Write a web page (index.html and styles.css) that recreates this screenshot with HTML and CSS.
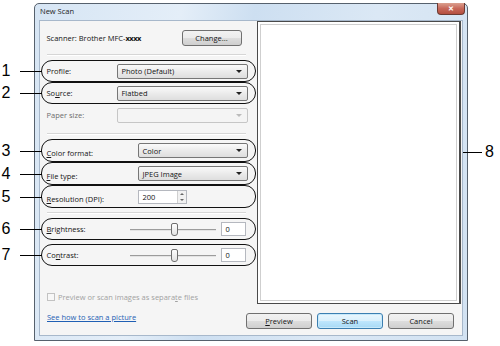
FILE: index.html
```html
<!DOCTYPE html>
<html lang="en">

<head>
    <meta charset="UTF-8">
    <meta name="viewport" content="width=device-width, initial-scale=1.0">
    <title>New Scan</title>
    <link rel="stylesheet" href="styles.css">
</head>

<body>
    <div class="window">
        <div class="titlebar">
            <span class="title">New Scan</span>
            <button class="close">&#x2715;</button>
        </div>

        <div class="client">
            <div class="main">
                <div class="settings">
                    <div class="row scanner-row">
                        <span class="scanner-name">Scanner: Brother MFC-<b>xxxx</b></span>
                        <button class="btn change">Change...</button>
                    </div>

                    <div class="sep"></div>

                    <div class="row marked first-sep">
                        <span class="callout">1</span>
                        <label class="lbl w70">Profile:</label>
                        <div class="select wide"><span>Photo (Default)</span><i class="arrow"></i></div>
                    </div>
                    <div class="row marked">
                        <span class="callout">2</span>
                        <label class="lbl w70">So<u>u</u>rce:</label>
                        <div class="select wide"><span>Flatbed</span><i class="arrow"></i></div>
                    </div>
                    <div class="row">
                        <label class="lbl w70 dim">Paper size:</label>
                        <div class="select wide disabled"><span></span><i class="arrow"></i></div>
                    </div>

                    <div class="sep"></div>

                    <div class="row marked tall first-sep">
                        <span class="callout">3</span>
                        <label class="lbl w91 low"><u>C</u>olor format:</label>
                        <div class="select mid"><span>Color</span><i class="arrow"></i></div>
                    </div>
                    <div class="row marked tall">
                        <span class="callout">4</span>
                        <label class="lbl w91 low"><u>F</u>ile type:</label>
                        <div class="select mid"><span>JPEG Image</span><i class="arrow"></i></div>
                    </div>
                    <div class="row marked tall">
                        <span class="callout">5</span>
                        <label class="lbl w91 low"><u>R</u>esolution (DPI):</label>
                        <div class="spin">
                            <span>200</span>
                            <div class="spin-btns"><i class="up"></i><i class="down"></i></div>
                        </div>
                    </div>

                    <div class="sep"></div>

                    <div class="row marked first-sep">
                        <span class="callout">6</span>
                        <label class="lbl w83"><u>B</u>rightness:</label>
                        <div class="slider"><i class="thumb"></i></div>
                        <div class="value">0</div>
                    </div>
                    <div class="row marked gap-top">
                        <span class="callout">7</span>
                        <label class="lbl w83">Co<u>n</u>trast:</label>
                        <div class="slider"><i class="thumb"></i></div>
                        <div class="value">0</div>
                    </div>

                    <div class="check">
                        <i class="box"></i>
                        <span>Preview or scan images as separa<u>t</u>e files</span>
                    </div>
                </div>

                <div class="preview">
                    <span class="callout right">8</span>
                </div>
            </div>

            <div class="footer">
                <a class="link" href="#">See how to scan a picture</a>
                <div class="buttons">
                    <button class="btn"><u>P</u>review</button>
                    <button class="btn default">Scan</button>
                    <button class="btn">Cancel</button>
                </div>
            </div>
        </div>
    </div>
</body>

</html>
```

FILE: styles.css
```css
body {
    margin: 0;
    background: #fff;
    font-family: "Open Sans", "Liberation Sans", sans-serif;
    font-size: 7.5px;
    color: #141414;
}

.window {
    box-sizing: border-box;
    width: 434px;
    height: 338px;
    margin: 3px 0 0 34px;
    padding: 0 5px 5px 5px;
    border: 1px solid #56616d;
    border-radius: 5px 5px 0 0;
    background: linear-gradient(100deg, #d6e5f4 0%, #e4eef8 30%, #cddff1 45%, #dbe8f5 70%, #d2e2f2 100%);
    display: flex;
    flex-direction: column;
}

.titlebar {
    height: 17px;
    display: flex;
    align-items: flex-start;
    justify-content: space-between;
}

.title {
    margin-top: 2px;
    color: #222;
}

.close {
    width: 28px;
    height: 12px;
    margin: -1px -3px 0 0;
    padding: 0;
    border: 1px solid #6b3a32;
    border-top: none;
    border-radius: 0 0 4px 4px;
    background: linear-gradient(#dba08f, #c7685a 50%, #b44f3f);
    color: #fff;
    font-size: 7px;
    font-weight: bold;
    line-height: 11px;
}

.client {
    flex: 1;
    display: flex;
    flex-direction: column;
    background: #f5f5f5;
    box-shadow: 0 0 0 1px #a7b8cb;
    padding-right: 1px;
}

.main {
    height: 283px;
    display: flex;
}

.settings {
    width: 217px;
    padding: 8px 0 0 1px;
    box-sizing: border-box;
}

.row {
    position: relative;
    box-sizing: border-box;
    width: 215px;
    height: 22px;
    display: flex;
    align-items: center;
    padding: 0 6.5px 0 4.5px;
    border: 1.5px solid transparent;
    border-radius: 11px;
}

.row.marked {
    border-color: #111;
}

.row.tall {
    height: 23px;
}

.row.first-sep {
    margin-top: 4px;
}

.row.gap-top {
    margin-top: 4px;
}

.scanner-row {
    height: 18px;
}

.scanner-name b {
    letter-spacing: -0.5px;
}

.sep {
    width: 199px;
    margin: 7px 0 0 6px;
    border-top: 1px solid #d6d6d6;
    border-bottom: 1px solid #fff;
}

.row.tall + .sep {
    margin-top: 4px;
}

.lbl {
    flex: none;
}

.w70 { width: 70px; }
.w83 { width: 83px; }
.w91 { width: 91px; }

.lbl.low {
    margin-top: 4px;
}

.lbl.dim {
    color: #6d6d6d;
}

.select {
    box-sizing: border-box;
    height: 15px;
    display: flex;
    align-items: center;
    justify-content: space-between;
    padding: 0 5px 0 4px;
    border: 1px solid #767676;
    border-radius: 2px;
    background: linear-gradient(#fafafa, #ebebeb 50%, #dedede);
}

.select.wide { width: 131px; }
.select.mid { width: 110px; }

.select.disabled {
    border-color: #c6c6c6;
    background: #f4f4f4;
}

.arrow {
    width: 0;
    height: 0;
    border-left: 3px solid transparent;
    border-right: 3px solid transparent;
    border-top: 3px solid #222;
}

.select.disabled .arrow {
    border-top-color: #bbb;
}

.spin {
    box-sizing: border-box;
    width: 49px;
    height: 14px;
    display: flex;
    align-items: center;
    justify-content: space-between;
    padding-left: 4px;
    border: 1px solid #b5b8bf;
    background: #fff;
}

.spin-btns {
    width: 8px;
    height: 12px;
    display: flex;
    flex-direction: column;
    justify-content: space-around;
    align-items: center;
    border-left: 1px solid #d0d0d0;
    background: #f1f1f1;
}

.spin-btns .up,
.spin-btns .down {
    width: 0;
    height: 0;
    border-left: 2px solid transparent;
    border-right: 2px solid transparent;
}

.spin-btns .up { border-bottom: 2px solid #666; }
.spin-btns .down { border-top: 2px solid #666; }

.slider {
    position: relative;
    width: 86px;
    height: 13px;
    background: linear-gradient(#9c9c9c, #9c9c9c) 0 6px / 100% 1px no-repeat,
        linear-gradient(#e4e4e4, #e4e4e4) 0 7px / 100% 1px no-repeat;
}

.thumb {
    position: absolute;
    left: 41px;
    top: 0;
    box-sizing: border-box;
    width: 7px;
    height: 13px;
    border: 1px solid #6e6e6e;
    border-radius: 2px 2px 3px 3px;
    background: linear-gradient(#fdfdfd, #e3e3e3);
}

.value {
    box-sizing: border-box;
    width: 25px;
    height: 14px;
    margin-left: 5px;
    padding-left: 4px;
    border: 1px solid #b5b8bf;
    background: #fff;
    line-height: 12px;
}

.check {
    display: flex;
    align-items: center;
    gap: 3px;
    margin: 26px 0 0 6px;
    color: #a2a2a2;
}

.check .box {
    box-sizing: border-box;
    width: 8px;
    height: 8px;
    border: 1px solid #c2c2c2;
    background: #f7f7f7;
}

.preview {
    position: relative;
    flex: 1;
    border: 1px solid #4a4a4a;
    border-right-width: 2px;
    background: #fff;
    box-shadow: inset 0 0 0 2px #fff, inset 0 0 0 3px #cfcfcf;
}

.footer {
    flex: 1;
    display: flex;
    align-items: flex-start;
    justify-content: space-between;
    padding: 9px 7px 0 7px;
}

.link {
    margin-top: -1px;
    color: #1f5fb4;
    text-decoration: underline;
}

.buttons {
    display: flex;
    gap: 5px;
}

.btn {
    box-sizing: border-box;
    width: 66px;
    height: 16px;
    padding: 0;
    border: 1px solid #707070;
    border-radius: 3px;
    background: linear-gradient(#f2f2f2, #ebebeb 50%, #dddddd 51%, #cfcfcf);
    font-family: "Open Sans", "Liberation Sans", sans-serif;
    font-size: 7.5px;
    color: #141414;
}

.btn.default {
    border-color: #3c7fb1;
    background: linear-gradient(#eaf6fd, #d9f0fc 50%, #bee6fd 51%, #a7d9f5);
    box-shadow: inset 0 0 0 1px #c8e9fa;
}

.btn.change {
    width: 60px;
    margin: 0 7px 0 auto;
}

.callout {
    position: absolute;
    left: -40.5px;
    top: 50%;
    transform: translateY(-50%);
    font-family: "Liberation Sans", sans-serif;
    font-size: 16px;
    line-height: 1;
    color: #000;
}

.callout::after {
    content: "";
    position: absolute;
    left: 18px;
    top: 50%;
    width: 22px;
    border-top: 1.5px solid #000;
}

.callout.right {
    left: auto;
    right: -35px;
    top: 130px;
}

.callout.right::after {
    left: -22px;
    width: 19px;
}
```
